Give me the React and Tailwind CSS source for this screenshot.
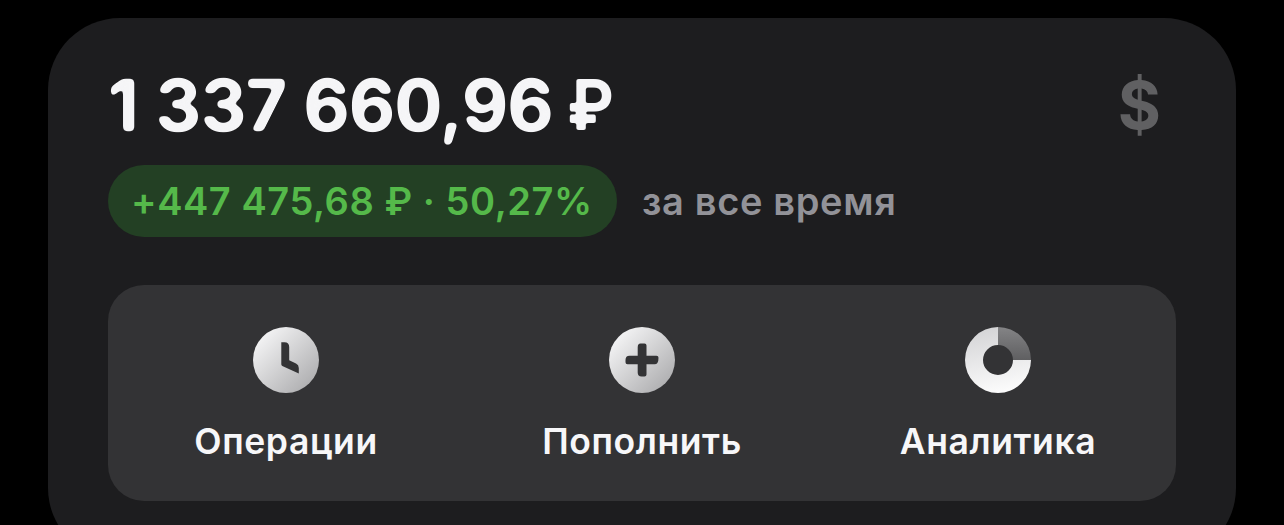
import React from 'react';

// blurs the letter shapes and sharpens them again, which rounds off their corners
const RoundFilter = () => (
  <svg width="0" height="0" className="absolute" aria-hidden="true">
    <filter id="round" x="-5%" y="-10%" width="110%" height="120%" colorInterpolationFilters="sRGB">
      <feGaussianBlur stdDeviation="2.2" />
      <feComponentTransfer>
        <feFuncA type="linear" slope="6" intercept="-2.2" />
      </feComponentTransfer>
    </filter>
    <filter id="round-sm" x="-10%" y="-10%" width="120%" height="120%" colorInterpolationFilters="sRGB">
      <feGaussianBlur stdDeviation="1" />
      <feComponentTransfer>
        <feFuncA type="linear" slope="3" intercept="-1" />
      </feComponentTransfer>
    </filter>
  </svg>
);

const ClockIcon = () => (
  <svg width="66" height="66" viewBox="0 0 66 66" fill="none">
    <defs>
      <linearGradient id="clock-fill" x1="8" y1="8" x2="58" y2="58" gradientUnits="userSpaceOnUse">
        <stop stopColor="#f4f4f5" />
        <stop offset="1" stopColor="#afafb1" />
      </linearGradient>
    </defs>
    <circle cx="33" cy="33" r="33" fill="url(#clock-fill)" />
    <path
      d="M28.3 15.2H31.5Q36.2 15.2 36.2 20V33.2L43 36.4Q45.8 37.8 45.8 41V46.4L29.3 38.9Q28.3 38.4 28.3 37.2Z"
      fill="#333335"
    />
  </svg>
);

const PlusIcon = () => (
  <svg width="66" height="66" viewBox="0 0 66 66" fill="none">
    <defs>
      <linearGradient id="plus-fill" x1="8" y1="8" x2="58" y2="58" gradientUnits="userSpaceOnUse">
        <stop stopColor="#f4f4f5" />
        <stop offset="1" stopColor="#afafb1" />
      </linearGradient>
    </defs>
    <circle cx="33" cy="33" r="33" fill="url(#plus-fill)" />
    <path
      d="M31.5 16.5H35.5Q37.5 16.5 37.5 18.5V28.7H47.5Q49.5 28.7 49.5 30.7Q49.5 37.3 45.5 37.3H37.5V47.5Q37.5 49.5 35.5 49.5H32.5Q28.7 49.5 28.7 45.5V37.3H18.5Q16.5 37.3 16.5 35.3V33Q16.5 28.7 20.5 28.7H28.7V20.5Q28.7 16.5 31.5 16.5Z"
      fill="#333335"
    />
  </svg>
);

const ChartIcon = () => (
  <svg width="66" height="66" viewBox="0 0 66 66" fill="none">
    <defs>
      <linearGradient id="chart-fill" x1="22" y1="0" x2="36" y2="66" gradientUnits="userSpaceOnUse">
        <stop stopColor="#d4d4d6" />
        <stop offset="1" stopColor="#fcfcfc" />
      </linearGradient>
      <linearGradient id="chart-slice" x1="40" y1="0" x2="40" y2="33" gradientUnits="userSpaceOnUse">
        <stop stopColor="#848486" />
        <stop offset="1" stopColor="#5f5f61" />
      </linearGradient>
    </defs>
    <path d="M33 0A33 33 0 1 0 66 33H48A15 15 0 1 1 33 18Z" fill="url(#chart-fill)" />
    <path d="M33 0A33 33 0 0 1 66 33H48A15 15 0 0 0 33 18Z" fill="url(#chart-slice)" />
  </svg>
);

const actions = [
  { label: 'Операции', Icon: ClockIcon },
  { label: 'Пополнить', Icon: PlusIcon },
  { label: 'Аналитика', Icon: ChartIcon },
];

const App = () => {
  return (
    <div className="h-[525px] overflow-hidden bg-black px-12 pt-[18px] font-['Inter',sans-serif]">
      <RoundFilter />
      <div className="h-[542px] rounded-[72px] bg-[#1d1d1f] px-[60px] pt-[51px]">
        <div className="flex h-[72px] items-center justify-between">
          <h1 className="flex gap-[14px] text-[71px] leading-[72px] font-bold whitespace-nowrap text-[#f5f5f7]">
            <span className="tracking-[-0.6px] [filter:url(#round)] [word-spacing:1px]">1 337 660,96</span>
            <span className="origin-left scale-x-90 text-[70px] [filter:url(#round-sm)]">₽</span>
          </h1>
          <button className="mr-[15px] text-[66px] leading-[72px] font-bold text-[#606062]">$</button>
        </div>

        <div className="mt-6 flex items-center gap-[25px] whitespace-nowrap">
          <div className="flex h-[72px] w-[509px] items-center rounded-full bg-[#234024] pl-[23px] text-[38px] font-[580] tracking-[0.56px] text-[#55b94a]">
            +447 475,68 ₽ · 50,27%
          </div>
          <span className="text-[38px] font-[580] tracking-[0.65px] text-[#929298]">за все время</span>
        </div>

        <div className="mt-12 grid h-[216px] grid-cols-3 rounded-[36px] bg-[#333335]">
          {actions.map(({ label, Icon }) => (
            <button key={label} className="flex flex-col items-center pt-[42px]">
              <Icon />
              <span className="mt-[26px] text-[35.5px] leading-[46px] font-[580] tracking-[0.6px] text-[#f7f7f9]">
                {label}
              </span>
            </button>
          ))}
        </div>
      </div>
    </div>
  );
};

export default App;
